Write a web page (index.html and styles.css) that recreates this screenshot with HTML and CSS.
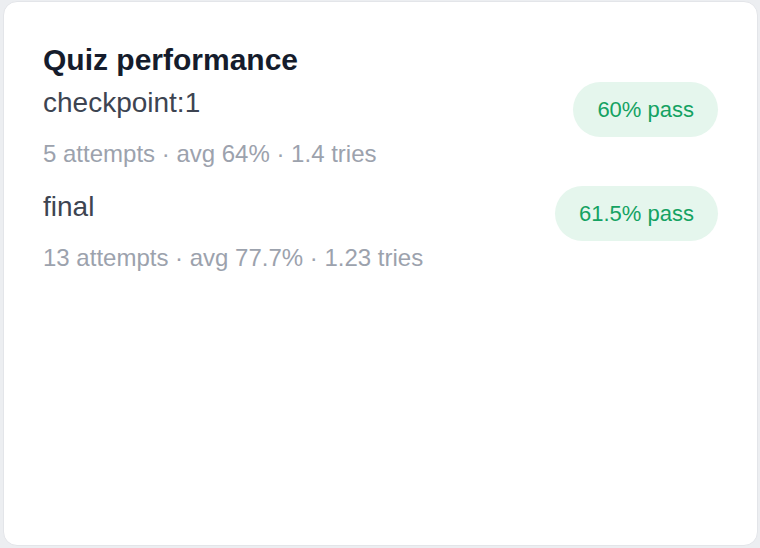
FILE: index.html
```html
<!DOCTYPE html>
<html lang="en">
<head>
<meta charset="UTF-8">
<meta name="viewport" content="width=device-width, initial-scale=1.0">
<title>Quiz performance</title>
<link rel="stylesheet" href="styles.css">
</head>
<body>
    <div class="card">
        <h2 class="card-title">Quiz performance</h2>
        <div class="quiz-list">
            <div class="quiz-row">
                <div class="quiz-info">
                    <div class="quiz-name">checkpoint:1</div>
                    <div class="quiz-meta">5 attempts · avg 64% · 1.4 tries</div>
                </div>
                <span class="pass-badge">60% pass</span>
            </div>
            <div class="quiz-row">
                <div class="quiz-info">
                    <div class="quiz-name">final</div>
                    <div class="quiz-meta">13 attempts · avg 77.7% · 1.23 tries</div>
                </div>
                <span class="pass-badge">61.5% pass</span>
            </div>
        </div>
    </div>
</body>
</html>
```

FILE: styles.css
```css
html, body {
    height: 100%;
}

body {
    margin: 0;
    padding: 1px 2px 2px 3px;
    box-sizing: border-box;
    background-color: #eceef1;
    font-family: "Liberation Sans", Arial, sans-serif;
}

.card {
    height: 100%;
    box-sizing: border-box;
    background-color: #fff;
    border: 1px solid #e3e5e9;
    border-radius: 14px;
    padding: 40px 39px 40px 39px;
}

.card-title {
    margin: 0 0 4px;
    font-size: 30px;
    line-height: 36px;
    font-weight: bold;
    color: #151c2c;
}

.quiz-list {
    display: flex;
    flex-direction: column;
    gap: 14px;
}

.quiz-row {
    display: flex;
    justify-content: space-between;
    align-items: flex-start;
}

.quiz-name {
    font-size: 28px;
    line-height: 42px;
    color: #3d4451;
}

.quiz-meta {
    margin-top: 12px;
    font-size: 24px;
    line-height: 36px;
    color: #9ca2ad;
}

.pass-badge {
    background-color: #e5f6ed;
    color: #14a262;
    font-size: 22px;
    line-height: 33px;
    padding: 11px 24px;
    border-radius: 999px;
}
```
